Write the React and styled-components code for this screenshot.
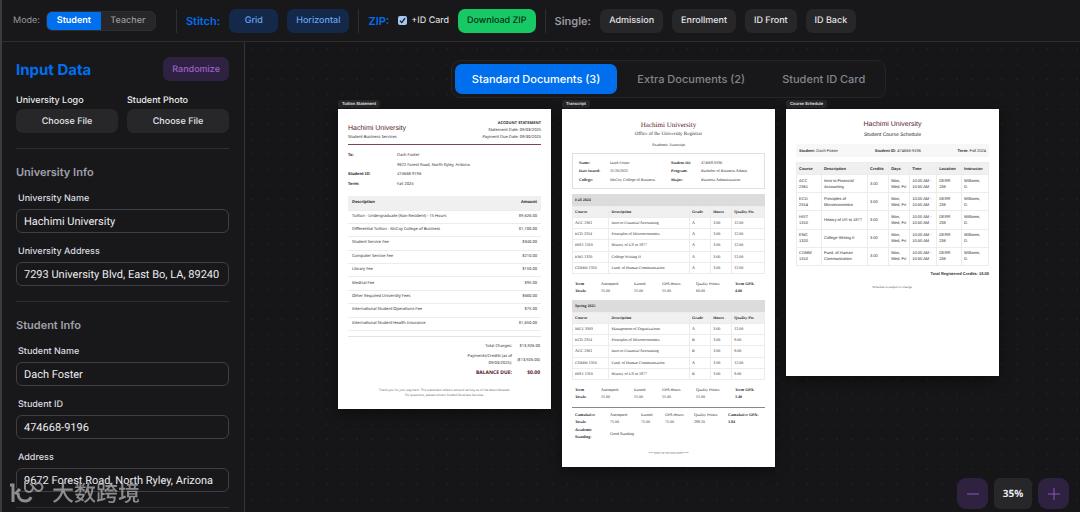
import React, { useState } from "react";
import styled, { createGlobalStyle, css } from "styled-components";

const GlobalStyle = createGlobalStyle`
  * {
    box-sizing: border-box;
  }

  body {
    margin: 0;
    background: #18181b;
    color: #ececee;
    font-family: Inter, "Liberation Sans", sans-serif;
    text-rendering: geometricPrecision;
    overflow: hidden;
  }

  button, input {
    font-family: inherit;
    text-rendering: inherit;
  }
`;

const Page = styled.div`
  display: flex;
  flex-direction: column;
  height: 100vh;
  border-left: 2px solid #3c3c3f;
`;

/* ---------- toolbar ---------- */

const Toolbar = styled.header`
  display: flex;
  align-items: center;
  gap: 9px;
  flex-shrink: 0;
  height: 42px;
  padding: 0 11px;
  border-bottom: 1px solid #2e2e31;
`;

const Mode = styled.span`
  color: #97979d;
  font-size: 9px;
`;

const Segment = styled.div`
  display: flex;
  height: 20px;
  margin: 0 11px 0 -3px;
  overflow: hidden;
  border: 1px solid #2d2d30;
  border-radius: 6px;
  background: #27272a;
`;

const SegmentButton = styled.button`
  min-width: 54px;
  padding: 0 9px;
  border: 0;
  background: ${(props) => (props.$active ? "#006fee" : "transparent")};
  color: ${(props) => (props.$active ? "#fff" : "#97979d")};
  font-size: 9px;
  font-weight: ${(props) => (props.$active ? 600 : 500)};
`;

const Divider = styled.span`
  width: 1px;
  height: 24px;
  background: #2e2e31;
`;

const GroupName = styled.span`
  color: ${(props) => props.$color};
  font-size: 11px;
  font-weight: 600;
`;

const tones = {
  blue: css`
    background: #14284a;
    color: #66a3ee;
  `,
  purple: css`
    background: #2f2140;
    color: #9a62cf;
  `,
  green: css`
    background: #17c964;
    color: #052e16;
  `,
  gray: css`
    background: #27272a;
    color: #e4e4e7;
  `,
};

const Button = styled.button`
  min-width: 49px;
  height: 24px;
  padding: 0 9px;
  border: 0;
  border-radius: 7px;
  font-size: 9px;
  font-weight: 500;
  white-space: nowrap;
  ${(props) => tones[props.$tone]}
`;

const CheckLabel = styled.label`
  display: flex;
  align-items: center;
  gap: 4px;
  color: #ececee;
  font-size: 9px;
`;

const Check = styled.input`
  appearance: none;
  width: 9px;
  height: 9px;
  margin: 0;
  border-radius: 2px;
  background: #a4c8f5;

  &:checked {
    background: #a4c8f5 url("data:image/svg+xml,%3Csvg xmlns='http://www.w3.org/2000/svg' viewBox='0 0 9 9'%3E%3Cpath d='M2 4.8l1.8 1.8L7 2.2' fill='none' stroke='%2318181b' stroke-width='1.3'/%3E%3C/svg%3E");
  }
`;

/* ---------- sidebar ---------- */

const Body = styled.div`
  display: flex;
  flex: 1;
  min-height: 0;
`;

const Sidebar = styled.aside`
  flex: 0 0 243px;
  padding: 15px 15px 0 14px;
  overflow: hidden;
  border-right: 1px solid #333336;
`;

const Row = styled.div`
  display: flex;
  align-items: center;
  justify-content: space-between;
`;

const Title = styled.h1`
  margin: 0;
  color: #006fee;
  font-size: 15px;
  font-weight: 700;
`;

const Uploads = styled.div`
  display: grid;
  grid-template-columns: 1fr 1fr;
  gap: 9px;
  margin-top: 13px;
`;

const Upload = styled.div`
  display: flex;
  flex-direction: column;
  gap: 1px;
  font-size: 9px;
  font-weight: 500;
  line-height: 14px;
`;

const Section = styled.section`
  margin-top: 15px;
  padding-top: 16px;
  border-top: 1px solid #2e2e31;
`;

const SectionTitle = styled.h2`
  margin: 0 0 13px;
  color: #a1a1aa;
  font-size: 11px;
  font-weight: 600;
  line-height: 14px;
`;

const Field = styled.div`
  margin-bottom: 12px;

  label {
    display: block;
    padding-left: 2px;
    margin-bottom: 3px;
    color: #dcdce0;
    font-size: 9px;
    font-weight: 500;
    line-height: 14px;
  }

  input {
    display: block;
    width: 100%;
    height: 24px;
    padding: 0 7px;
    border: 1px solid #3f3f46;
    border-radius: 6px;
    background: transparent;
    color: #ececee;
    font-family: Roboto, sans-serif;
    font-size: 11px;
  }
`;

/* ---------- preview ---------- */

const Main = styled.main`
  display: flex;
  flex: 1;
  flex-direction: column;
  align-items: center;
  min-width: 0;
  padding: 18px 0 0 12px;
  background: #161618 radial-gradient(circle, #1f1f22 1px, transparent 1px) 0 0 / 15px 15px;
`;

const Tabs = styled.div`
  display: flex;
  gap: 3px;
  height: 38px;
  padding: 3px;
  border: 1px solid #252528;
  border-radius: 9px;
  background: #18181b;
`;

const Tab = styled.button`
  padding: 0 17px;
  border: 0;
  border-radius: 7px;
  background: ${(props) => (props.$active ? "#006fee" : "transparent")};
  color: ${(props) => (props.$active ? "#fff" : "#85858b")};
  font-size: 11px;
  font-weight: 500;
  white-space: nowrap;
`;

const Papers = styled.div`
  display: flex;
  align-items: flex-start;
  gap: 11px;
  margin-top: 2px;
`;

const Tag = styled.div`
  width: fit-content;
  height: 8px;
  padding: 0 4px;
  border-radius: 2px;
  background: #27272a;
  color: #e4e4e7;
  font-size: 4px;
  font-weight: 600;
  line-height: 8px;
`;

const Paper = styled.article`
  width: 213px;
  margin-top: 1px;
  padding: 11px 10px;
  background: #fff;
  color: #2c2c2c;
  box-shadow: 0 4px 12px #0006;
  font-family: ${(props) => props.$font};
  font-size: 4px;
  line-height: 7px;
`;

const School = styled.h3`
  margin: 0;
  color: #5c1a2c;
  font-family: ${(props) => props.$font || "inherit"};
  font-size: 7px;
  font-weight: 400;
  line-height: 10px;
`;

const Center = styled.div`
  text-align: center;
`;

const Office = styled.div`
  font-size: ${(props) => props.$size}px;
  line-height: 10px;
`;

const Statement = styled.div`
  display: flex;
  justify-content: space-between;
  align-items: flex-end;
  padding-bottom: 3px;
  border-bottom: 1px solid #7d4552;
`;

const Right = styled.div`
  text-align: right;
`;

const Credits = styled(Right)`
  margin-top: 4px;
  font-weight: 700;
`;

const Facts = styled.dl`
  display: grid;
  grid-template-columns: ${(props) => props.$cols};
  grid-auto-rows: 1fr;
  align-items: center;
  height: ${(props) => props.$height}px;
  margin: ${(props) => props.$margin};
  padding: ${(props) => props.$padding || "0"};
  border: ${(props) => (props.$boxed ? "1px solid #e0e0e0" : "0")};

  dt {
    font-weight: 700;
  }

  dd {
    margin: 0;
  }
`;

const Table = styled.table`
  width: 100%;
  height: ${(props) => props.$height}px;
  table-layout: fixed;
  border-collapse: collapse;
  line-height: 6px;
  white-space: pre-line;

  caption {
    height: 12px;
    padding-left: 3px;
    background: #dcdcdc;
    font-weight: 700;
    line-height: 12px;
    text-align: left;
  }

  th {
    height: ${(props) => props.$head}px;
    background: #f0f0f0;
    text-align: left;
  }

  th, td {
    padding: 0 ${(props) => props.$pad}px;
    border: 1px solid #ececec;
    border-width: ${(props) => (props.$lined ? "0 0 1px" : "1px")};
  }

  ${(props) =>
    props.$lined &&
    css`
      th:last-child, td:last-child {
        text-align: right;
      }
    `}
`;

const Totals = styled.div`
  display: grid;
  grid-template-columns: 1fr 28px;
  align-items: center;
  justify-items: end;
  row-gap: 3px;
  margin-top: 5px;
  padding: 6px 1px 0 110px;
  border-top: 1px solid #e4e4e4;
  text-align: right;
`;

const Due = styled.strong`
  color: #501424;
  font-size: 5px;
`;

const Note = styled.p`
  margin: ${(props) => props.$margin};
  color: #666;
  font-size: 3px;
  line-height: 5px;
  text-align: center;
`;

const TermTotals = styled.div`
  display: grid;
  grid-template-columns: ${(props) => props.$cols};
  align-items: center;
  margin: ${(props) => props.$margin || "0"};
  padding: 0 0 0 3px;
  white-space: pre-line;
`;

const Cumulative = styled.div`
  margin-top: 7px;
  padding-top: 3px;
  border-top: 1px solid #888;
`;

const Summary = styled.div`
  display: flex;
  justify-content: space-between;
  align-items: center;
  height: 13px;
  margin: 4px 0 5px;
  padding: 0 3px;
  background: #f7f7f7;
`;

/* ---------- zoom and mark ---------- */

const ZoomBar = styled.div`
  position: fixed;
  right: 11px;
  bottom: 3px;
  display: flex;
  gap: 6px;
`;

const ZoomButton = styled.button`
  display: grid;
  place-items: center;
  width: 31px;
  height: 31px;
  padding: 0;
  border: 0;
  border-radius: 9px;
  background: #2f2140;
  color: #8a58b8;
`;

const ZoomValue = styled.output`
  width: 38px;
  border-radius: 6px;
  background: #27272a;
  font-family: "Noto Sans", sans-serif;
  font-size: 10px;
  font-weight: 700;
  line-height: 31px;
  text-align: center;
`;

const Mark = styled.div`
  position: fixed;
  left: 10px;
  bottom: 6px;
  display: flex;
  align-items: center;
  gap: 4px;
  color: #b4b4b6;
  font-family: "Noto Sans CJK SC", sans-serif;
  font-size: 22px;
  font-weight: 500;
  line-height: 28px;
  opacity: 0.75;
  pointer-events: none;
`;

const fees = [
  ["Tuition - Undergraduate (Non-Resident) - 15 Hours", "$9,626.00"],
  ["Differential Tuition - McCoy College of Business", "$1,100.00"],
  ["Student Service Fee", "$340.00"],
  ["Computer Service Fee", "$210.00"],
  ["Library Fee", "$150.00"],
  ["Medical Fee", "$95.00"],
  ["Other Required University Fees", "$680.00"],
  ["International Student Operations Fee", "$75.00"],
  ["International Student Health Insurance", "$1,650.00"],
];

const fall = [
  ["ACC 2361", "Intro to Financial Accounting", "A", "3.00", "12.00"],
  ["ECO 2314", "Principles of Microeconomics", "A", "3.00", "12.00"],
  ["HIST 1310", "History of US to 1877", "A", "3.00", "12.00"],
  ["ENG 1320", "College Writing II", "A", "3.00", "12.00"],
  ["COMM 1310", "Fund. of Human Communication", "A", "3.00", "12.00"],
];

const spring = [
  ["MGT 3303", "Management of Organizations", "A", "3.00", "12.00"],
  ["ECO 2314", "Principles of Microeconomics", "B", "3.00", "9.00"],
  ["ACC 2361", "Intro to Financial Accounting", "B", "3.00", "9.00"],
  ["COMM 1310", "Fund. of Human Communication", "A", "3.00", "12.00"],
  ["HIST 1310", "History of US to 1877", "B", "3.00", "9.00"],
];

const schedule = [
  ["ACC\n2361", "Intro to Financial\nAccounting"],
  ["ECO\n2314", "Principles of\nMicroeconomics"],
  ["HIST\n1310", "History of US to 1877"],
  ["ENG\n1320", "College Writing II"],
  ["COMM\n1310", "Fund. of Human\nCommunication"],
].map((course) => [...course, "3.00", "Mon,\nWed, Fri", "10:00 AM -\n10:50 AM", "DERR\n238", "Williams,\nD."]);

function DataTable({ caption, heads, widths, rows, ...rest }) {
  return (
    <Table {...rest}>
      {caption && <caption>{caption}</caption>}
      <colgroup>
        {widths.map((width, i) => (
          <col key={i} width={width} />
        ))}
      </colgroup>
      <thead>
        <tr>{heads.map((head) => <th key={head}>{head}</th>)}</tr>
      </thead>
      <tbody>
        {rows.map((row) => (
          <tr key={row[0]}>
            {row.map((cell, i) => <td key={i}>{cell}</td>)}
          </tr>
        ))}
      </tbody>
    </Table>
  );
}

function TuitionStatement() {
  return (
    <div>
      <Tag>Tuition Statement</Tag>
      <Paper $font='"Noto Sans", sans-serif'>
        <Statement>
          <div>
            <School $font='"Liberation Sans", sans-serif'>Hachimi University</School>
            <div>Student Business Services</div>
          </div>
          <Right>
            <b>ACCOUNT STATEMENT</b>
            <div>Statement Date: 09/03/2025</div>
            <div>Payment Due Date: 09/30/2025</div>
          </Right>
        </Statement>
        <Facts $cols="49px 1fr" $height={38} $margin="6px 0 7px">
          <dt>To:</dt>
          <dd>Dach Foster</dd>
          <dt />
          <dd>9672 Forest Road, North Ryley, Arizona</dd>
          <dt>Student ID:</dt>
          <dd>474668-9196</dd>
          <dt>Term:</dt>
          <dd>Fall 2024</dd>
        </Facts>
        <DataTable
          $lined
          $pad={4}
          $height={135}
          $head={14}
          heads={["Description", "Amount"]}
          widths={["75%", "25%"]}
          rows={fees}
        />
        <Totals>
          <span>Total Charges:</span>
          <span>$13,926.00</span>
          <span>Payments/Credits (as of 09/03/2025):</span>
          <span>($13,926.00)</span>
          <Due>BALANCE DUE:</Due>
          <Due>$0.00</Due>
        </Totals>
        <Note $margin="11px 0 0">
          Thank you for your payment. This statement reflects account activity as of the date indicated.
          <br />
          For questions, please contact Student Business Services.
        </Note>
      </Paper>
    </div>
  );
}

const gradeTable = {
  $pad: 2,
  $height: 68,
  $head: 11,
  heads: ["Course", "Description", "Grade", "Hours", "Quality Pts"],
  widths: ["19%", "42%", "11%", "11%", "17%"],
};
const termCols = "26px 33px 28px 34px 39px 1fr";

function Transcript() {
  return (
    <div>
      <Tag>Transcript</Tag>
      <Paper $font='"Liberation Serif", serif'>
        <Center>
          <School>Hachimi University</School>
          <Office $size={5}>Office of the University Registrar</Office>
          <Office $size={4}>Academic Transcript</Office>
        </Center>
        <Facts $boxed $cols="31px 61px 30px 1fr" $height={36} $margin="3px 0 5px" $padding="4px 0 4px 6px">
          <dt>Name:</dt>
          <dd>Dach Foster</dd>
          <dt>Student ID:</dt>
          <dd>474668-9196</dd>
          <dt>Date Issued:</dt>
          <dd>11/20/2025</dd>
          <dt>Program:</dt>
          <dd>Bachelor of Business Admin</dd>
          <dt>College:</dt>
          <dd>McCoy College of Business</dd>
          <dt>Major:</dt>
          <dd>Business Administration</dd>
        </Facts>
        <DataTable {...gradeTable} caption="Fall 2024" rows={fall} />
        <TermTotals $cols={termCols} $margin="6px 0">
          <b>{"Term\nTotals:"}</b>
          <span>{"Attempted:\n15.00"}</span>
          <span>{"Earned:\n15.00"}</span>
          <span>{"GPA Hours:\n15.00"}</span>
          <span>{"Quality Points:\n60.00"}</span>
          <b>{"Term GPA:\n4.00"}</b>
        </TermTotals>
        <DataTable {...gradeTable} caption="Spring 2025" rows={spring} />
        <TermTotals $cols={termCols} $margin="6px 0">
          <b>{"Term\nTotals:"}</b>
          <span>{"Attempted:\n15.00"}</span>
          <span>{"Earned:\n15.00"}</span>
          <span>{"GPA Hours:\n15.00"}</span>
          <span>{"Quality Points:\n51.00"}</span>
          <b>{"Term GPA:\n3.40"}</b>
        </TermTotals>
        <Cumulative>
          <TermTotals $cols="35px 31px 24px 29px 34px 1fr">
            <b>{"Cumulative\nTotals:"}</b>
            <span>{"Attempted:\n75.00"}</span>
            <span>{"Earned:\n75.00"}</span>
            <span>{"GPA Hours:\n75.00"}</span>
            <span>{"Quality Points:\n288.20"}</span>
            <b>{"Cumulative GPA:\n3.84"}</b>
          </TermTotals>
          <TermTotals $cols="35px 1fr" $margin="1px 0 0">
            <b>{"Academic\nStanding:"}</b>
            <span>Good Standing</span>
          </TermTotals>
        </Cumulative>
        <Note $margin="11px 0 0">*** END OF TRANSCRIPT ***</Note>
      </Paper>
    </div>
  );
}

function CourseSchedule() {
  return (
    <div>
      <Tag>Course Schedule</Tag>
      <Paper $font='"Liberation Sans", sans-serif'>
        <Center>
          <School>Hachimi University</School>
          <Office $size={5}>Student Course Schedule</Office>
        </Center>
        <Summary>
          <span><b>Student:</b> Dach Foster</span>
          <span><b>Student ID:</b> 474668-9196</span>
          <span><b>Term:</b> Fall 2024</span>
        </Summary>
        <DataTable
          $pad={2}
          $height={104}
          $head={12}
          heads={["Course", "Description", "Credits", "Days", "Time", "Location", "Instructor"]}
          widths={["13%", "24%", "11%", "11%", "14%", "13%", "14%"]}
          rows={schedule}
        />
        <Credits>Total Registered Credits: 15.00</Credits>
        <Note $margin="8px 0 75px">Schedule is subject to change.</Note>
      </Paper>
    </div>
  );
}

function TextField({ id, label, value }) {
  const [text, setText] = useState(value);

  return (
    <Field>
      <label htmlFor={id}>{label}</label>
      <input id={id} value={text} onChange={(event) => setText(event.target.value)} />
    </Field>
  );
}

const tabs = ["Standard Documents (3)", "Extra Documents (2)", "Student ID Card"];

export default function App() {
  const [mode, setMode] = useState("Student");
  const [tab, setTab] = useState(tabs[0]);
  const [zoom, setZoom] = useState(35);

  return (
    <Page>
      <GlobalStyle />
      <Toolbar>
        <Mode>Mode:</Mode>
        <Segment>
          {["Student", "Teacher"].map((name) => (
            <SegmentButton key={name} $active={mode === name} onClick={() => setMode(name)}>{name}</SegmentButton>
          ))}
        </Segment>
        <Divider />
        <GroupName $color="#006fee">Stitch:</GroupName>
        <Button $tone="blue">Grid</Button>
        <Button $tone="blue">Horizontal</Button>
        <Divider />
        <GroupName $color="#006fee">ZIP:</GroupName>
        <CheckLabel>
          <Check type="checkbox" defaultChecked />
          +ID Card
        </CheckLabel>
        <Button $tone="green">Download ZIP</Button>
        <Divider />
        <GroupName $color="#97979d">Single:</GroupName>
        <Button $tone="gray">Admission</Button>
        <Button $tone="gray">Enrollment</Button>
        <Button $tone="gray">ID Front</Button>
        <Button $tone="gray">ID Back</Button>
      </Toolbar>

      <Body>
        <Sidebar>
          <Row>
            <Title>Input Data</Title>
            <Button $tone="purple">Randomize</Button>
          </Row>
          <Uploads>
            <Upload>
              <span id="logo">University Logo</span>
              <Button $tone="gray" aria-describedby="logo">Choose File</Button>
            </Upload>
            <Upload>
              <span id="photo">Student Photo</span>
              <Button $tone="gray" aria-describedby="photo">Choose File</Button>
            </Upload>
          </Uploads>
          <Section>
            <SectionTitle>University Info</SectionTitle>
            <TextField id="uni-name" label="University Name" value="Hachimi University" />
            <TextField id="uni-address" label="University Address" value="7293 University Blvd, East Bo, LA, 89240" />
          </Section>
          <Section>
            <SectionTitle>Student Info</SectionTitle>
            <TextField id="name" label="Student Name" value="Dach Foster" />
            <TextField id="student-id" label="Student ID" value="474668-9196" />
            <TextField id="address" label="Address" value="9672 Forest Road, North Ryley, Arizona" />
          </Section>
          <Section />
        </Sidebar>

        <Main>
          <Tabs role="tablist">
            {tabs.map((name) => (
              <Tab key={name} role="tab" aria-selected={tab === name} $active={tab === name} onClick={() => setTab(name)}>
                {name}
              </Tab>
            ))}
          </Tabs>
          <Papers>
            <TuitionStatement />
            <Transcript />
            <CourseSchedule />
          </Papers>
        </Main>
      </Body>

      <ZoomBar>
        <ZoomButton aria-label="Zoom out" onClick={() => setZoom(zoom - 5)}>
          <svg width="14" height="14" viewBox="0 0 14 14" stroke="currentColor"><path d="M1 7h12" /></svg>
        </ZoomButton>
        <ZoomValue>{zoom}%</ZoomValue>
        <ZoomButton aria-label="Zoom in" onClick={() => setZoom(zoom + 5)}>
          <svg width="14" height="14" viewBox="0 0 14 14" stroke="currentColor"><path d="M1 7h12M7 1v12" /></svg>
        </ZoomButton>
      </ZoomBar>

      <Mark>
        <svg width="38" height="22" viewBox="0 0 38 22" fill="none" stroke="currentColor" strokeWidth="3">
          <path d="M0 4h3v17M10 8L5 13M8 12c0 5 3 8 7 8 3 0 5-1 6-4" />
          <path d="M15 0v6a4 4 0 1 0 5-3c3 0 4 7 9 7a4 4 0 1 0-4-6" strokeWidth="2" />
        </svg>
        大数跨境
      </Mark>
    </Page>
  );
}
